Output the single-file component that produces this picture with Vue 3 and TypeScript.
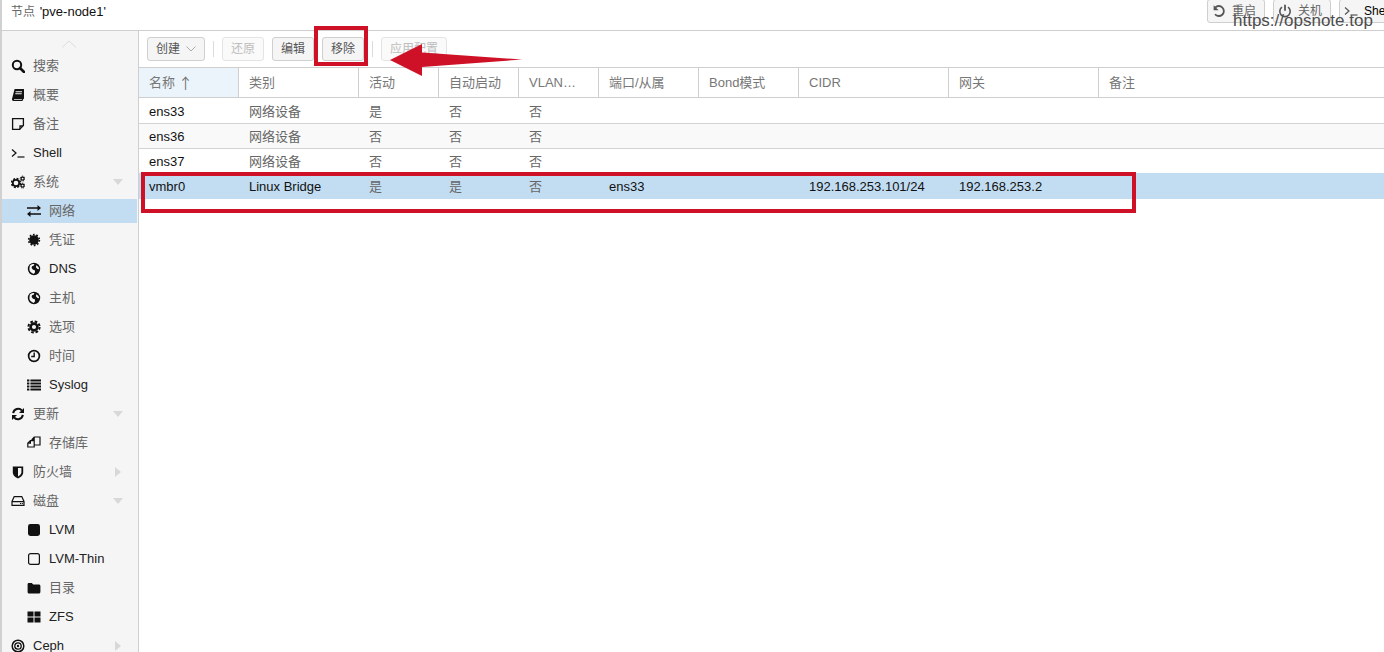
<script setup lang="ts">
const icons: Record<string, string> = {
  search: '<circle cx="6" cy="6" r="4.2" fill="none" stroke="currentColor" stroke-width="2"/><path d="M9 9l4 4" stroke="currentColor" stroke-width="2.6" stroke-linecap="round"/>',
  book: '<path d="M3.6 1h9.4v9.6l-1 .9-.5 1.5H2.6C1.4 13 1 12 1 11zM4.6 3.2v1h6.4v-1zM4.3 5.2v1h6.4v-1z" fill-rule="evenodd"/><path d="M3 11.2h8l-.3.9H3z" fill="#f5f5f5"/>',
  note: '<path d="M1.6 1.6h10.8v7l-3.8 3.8H1.6z" fill="none" stroke="currentColor" stroke-width="1.3"/><path d="M12 9H9v3.2" fill="none" stroke="currentColor" stroke-width="1.3"/>',
  terminal: '<path d="M1 3.5l4 3.5-4 3.5" fill="none" stroke="currentColor" stroke-width="1.2"/><path d="M6.5 11h7" stroke="currentColor" stroke-width="1.2"/>',
  cogs: '<circle cx="5" cy="8" r="3.2" fill="none" stroke="currentColor" stroke-width="1.7"/><circle cx="5" cy="8" r="4.4" fill="none" stroke="currentColor" stroke-width="1.6" stroke-dasharray="2 1.46"/><circle cx="11.6" cy="3.6" r="1.5" fill="none" stroke="currentColor" stroke-width="1.1"/><circle cx="11.6" cy="3.6" r="2.4" fill="none" stroke="currentColor" stroke-width="1" stroke-dasharray="1.2 .7"/><circle cx="11.6" cy="10.6" r="1.5" fill="none" stroke="currentColor" stroke-width="1.1"/><circle cx="11.6" cy="10.6" r="2.4" fill="none" stroke="currentColor" stroke-width="1" stroke-dasharray="1.2 .7"/>',
  exchange: '<path d="M0 4h10.5V1.7L14 4.8l-3.5 3V5.6H0z" transform="translate(0 -.8)"/><path d="M14 10H3.5v2.3L0 9.2l3.5-3v2.2H14z" transform="translate(0 .8)"/>',
  cert: '<circle cx="7" cy="7" r="4.8"/><circle cx="7" cy="7" r="5.4" fill="none" stroke="currentColor" stroke-width="1.6" stroke-dasharray="1.7 1.69"/>',
  globe: '<circle cx="7" cy="7" r="6.2"/><path d="M3 3.4c1.5-1.2 3-1.6 4.4-1.3L6.6 3.7 5 4.2 4.6 6 6 7.8l1.8.4.3 2-1.4 1.9C5 11.2 3 10 2.6 8.5 2.4 6.6 2.4 5 3 3.4zM9.3 3.2l2.2 1.7.6 2.4-1.6-.4-1.6-1.7z" fill="#f5f5f5"/>',
  cog: '<circle cx="7" cy="7" r="3.4" fill="none" stroke="currentColor" stroke-width="2.6"/><circle cx="7" cy="7" r="5.6" fill="none" stroke="currentColor" stroke-width="2" stroke-dasharray="2.6 1.8"/>',
  clock: '<circle cx="7" cy="7" r="5.4" fill="none" stroke="currentColor" stroke-width="1.7"/><path d="M7.2 3.6v3.9H4.2" fill="none" stroke="currentColor" stroke-width="1.4"/>',
  list: '<path d="M0 2h2.4v2H0zM3.4 2H14v2H3.4zM0 5h2.4v2H0zM3.4 5H14v2H3.4zM0 8h2.4v2H0zM3.4 8H14v2H3.4zM0 11h2.4v2H0zM3.4 11H14v2H3.4z" transform="translate(0 -.5)"/>',
  refresh: '<path d="M2.2 6.2A5 5 0 0 1 11 3.6" fill="none" stroke="currentColor" stroke-width="2"/><path d="M13 1v5H8z"/><path d="M11.8 7.8A5 5 0 0 1 3 10.4" fill="none" stroke="currentColor" stroke-width="2"/><path d="M1 13V8h5z"/>',
  clone: '<path d="M.8 7.2L3.4 4.600h3.800V11H.8zM3.400 4.600v2.600H.8M5 4.600V3.400L7.200 1h5.800v8H7.200M7.200 1v2.600H5" fill="none" stroke="currentColor" stroke-width="1.200"/>',
  shield: '<path d="M1.8 1.4h10.4v6c0 3-3 5-5.2 6-2.2-1-5.2-3-5.2-6z"/><path d="M7 3v8.4c1.6-.9 3.4-2.4 3.4-4.2V3z" fill="#f5f5f5"/>',
  hdd: '<path d="M3.2 2.6h7.6L13 7.4v4H1v-4zM1.4 7.6h11.2" fill="none" stroke="currentColor" stroke-width="1.2"/><path d="M9 9h1.200v1H9zM10.900 9h1v1h-1z"/>',
  square: '<rect x="1" y="1" width="12" height="12" rx="2.400"/>',
  squareo: '<rect x="1.600" y="1.600" width="10.800" height="10.800" rx="2" fill="none" stroke="currentColor" stroke-width="1.200"/>',
  folder: '<path d="M.6 3.4C.6 2.4 1.2 2 2 2h2.800L6.200 3.600h5.600c.9 0 1.600.6 1.600 1.500v6c0 .9-.7 1.500-1.600 1.500H2c-.8 0-1.400-.6-1.400-1.500z"/>',
  th: '<path d="M.5 1.500h6v5h-6zM7.500 1.500h6v5h-6zM.5 7.500h6v5h-6zM7.500 7.500h6v5h-6z"/>',
  ceph: '<circle cx="7" cy="7" r="5.800" fill="none" stroke="currentColor" stroke-width="1.500"/><circle cx="7" cy="7" r="3.200" fill="none" stroke="currentColor" stroke-width="1.300"/><circle cx="7" cy="7" r="1.200"/>',
  undo: '<path d="M3.200 3.600A5 5 0 1 1 3 10.200" fill="none" stroke="currentColor" stroke-width="1.800"/><path d="M1.600 1.200v5h5z"/>',
  power: '<path d="M4 3.200a5.200 5.200 0 1 0 6 0" fill="none" stroke="currentColor" stroke-width="1.600"/><path d="M7 .8v6" stroke="currentColor" stroke-width="1.800"/>'
}

interface NavItem { icon: string; label: string; level: number; caret?: 'down' | 'right'; latin?: boolean; active?: boolean }

const nav: NavItem[] = [
  { icon: 'search', label: '搜索', level: 1 },
  { icon: 'book', label: '概要', level: 1 },
  { icon: 'note', label: '备注', level: 1 },
  { icon: 'terminal', label: 'Shell', level: 1, latin: true },
  { icon: 'cogs', label: '系统', level: 1, caret: 'down' },
  { icon: 'exchange', label: '网络', level: 2, active: true },
  { icon: 'cert', label: '凭证', level: 2 },
  { icon: 'globe', label: 'DNS', level: 2, latin: true },
  { icon: 'globe', label: '主机', level: 2 },
  { icon: 'cog', label: '选项', level: 2 },
  { icon: 'clock', label: '时间', level: 2 },
  { icon: 'list', label: 'Syslog', level: 2, latin: true },
  { icon: 'refresh', label: '更新', level: 1, caret: 'down' },
  { icon: 'clone', label: '存储库', level: 2 },
  { icon: 'shield', label: '防火墙', level: 1, caret: 'right' },
  { icon: 'hdd', label: '磁盘', level: 1, caret: 'down' },
  { icon: 'square', label: 'LVM', level: 2, latin: true },
  { icon: 'squareo', label: 'LVM-Thin', level: 2, latin: true },
  { icon: 'folder', label: '目录', level: 2 },
  { icon: 'th', label: 'ZFS', level: 2, latin: true },
  { icon: 'ceph', label: 'Ceph', level: 1, caret: 'right', latin: true }
]

const columns = ['名称', '类别', '活动', '自动启动', 'VLAN…', '端口/从属', 'Bond模式', 'CIDR', '网关', '备注']

const rows = [
  { cells: ['ens33', '网络设备', '是', '否', '否', '', '', '', '', ''] },
  { cells: ['ens36', '网络设备', '否', '否', '否', '', '', '', '', ''] },
  { cells: ['ens37', '网络设备', '否', '否', '否', '', '', '', '', ''] },
  { cells: ['vmbr0', 'Linux Bridge', '是', '是', '否', 'ens33', '', '192.168.253.101/24', '192.168.253.2', ''] }
]

const isCjk = (s: string) => /[\u4e00-\u9fff]/.test(s)
</script>

<template>
  <div class="page">
    <header class="top">
      <div class="title"><span class="cjk">节点</span> 'pve-node1'</div>
      <button class="btn top-btn"><svg class="ic-g" viewBox="0 0 14 14" v-html="icons.undo"></svg><span>重启</span></button>
      <button class="btn top-btn"><svg class="ic-g" viewBox="0 0 14 14" v-html="icons.power"></svg><span>关机</span></button>
      <button class="btn top-btn shell"><svg class="ic-g" viewBox="0 0 14 14" v-html="icons.terminal"></svg><b>Shell</b></button>
    </header>
    <div class="body">
      <aside class="side">
        <div class="scroll-up"><svg width="16" height="8" viewBox="0 0 16 8"><path d="M1 7.500L8 1l7 6.500" fill="none" stroke="#dcdcdc"/></svg></div>
        <div
          v-for="item in nav"
          :key="item.label + item.icon"
          class="nav"
          :class="{ sub: item.level === 2, active: item.active }"
        >
          <svg class="ic" viewBox="0 0 14 14" v-html="icons[item.icon]"></svg>
          <span :class="{ cjk: !item.latin }">{{ item.label }}</span>
          <i v-if="item.caret" class="caret" :class="item.caret"></i>
        </div>
      </aside>
      <main class="main">
        <div class="toolbar">
          <button class="btn tool">创建<svg width="10" height="6" viewBox="0 0 10 6"><path d="M.5.5L5 5 9.500.5" fill="none" stroke="#aaa"/></svg></button>
          <i class="sep"></i>
          <button class="btn tool off">还原</button>
          <button class="btn tool">编辑</button>
          <button class="btn tool">移除</button>
          <i class="sep"></i>
          <button class="btn tool off last">应用配置</button>
        </div>
        <div class="grid head">
          <div v-for="(c, i) in columns" :key="c" class="hcell" :class="{ sorted: i === 0 }">{{ c }}<span v-if="i === 0" class="sort">↑</span></div>
        </div>
        <div
          v-for="(r, i) in rows"
          :key="r.cells[0]"
          class="grid row"
          :class="{ first: i === 0, alt: i === 1, sel: i === 3 }"
        >
          <div v-for="(c, j) in r.cells" :key="j" class="cell" :class="{ cjk: isCjk(c) }">{{ c }}</div>
        </div>
      </main>
    </div>

    <div class="mark box1"></div>
    <div class="mark box2"></div>
    <svg class="arrow" width="140" height="34" viewBox="0 0 140 34">
      <path d="M1 16L33 0v8.500L133 15.500 33 23v9z" fill="#ce1126"/>
    </svg>
    <div class="wm">https://opsnote.top</div>
  </div>
</template>

<style>
html, body { margin: 0; background: #fff; }
</style>

<style scoped>
.page {
  position: relative;
  width: 1384px;
  height: 652px;
  overflow: hidden;
  display: flex;
  flex-direction: column;
  box-sizing: border-box;
  border-left: 2px solid #d0d0d0;
  font: 13px/16px "Liberation Sans", "Noto Sans CJK SC", sans-serif;
  color: #111;
  background: #fff;
}
.cjk { color: #666; }
.top {
  flex: 0 0 31px;
  box-sizing: border-box;
  border-bottom: 1px solid #cfcfcf;
  display: flex;
  align-items: flex-start;
  gap: 8px;
}
.title {
  flex: 0 0 1197px;
  box-sizing: border-box;
  padding: 4px 0 0 9px;
  white-space: nowrap;
  word-spacing: 1px;
}
.title .cjk { font-size: 12px; }
.btn {
  box-sizing: border-box;
  display: inline-flex;
  align-items: center;
  justify-content: center;
  background: #f5f5f5;
  border: 1px solid #cfcfcf;
  border-radius: 3px;
  font: 12px/16px "Liberation Sans", "Noto Sans CJK SC", sans-serif;
  color: #555;
  padding: 0;
}
.top-btn {
  flex: none;
  width: 58px;
  height: 24px;
  margin-top: -1px;
  justify-content: flex-start;
  padding-left: 4px;
  gap: 6px;
  color: #666;
}
.top-btn.shell { width: 70px; }
.top-btn b { font-weight: 400; font-size: 12px; color: #000; }
.ic-g { width: 14px; height: 14px; fill: #555; color: #555; flex: none; }
.body { flex: 1; display: flex; min-height: 0; }
.side {
  flex: 0 0 136px;
  display: flex;
  flex-direction: column;
  border-right: 1px solid #cfcfcf;
  background: #f5f5f5;
  overflow: hidden;
}
.scroll-up { flex: none; height: 20px; display: flex; justify-content: center; align-items: flex-end; padding-right: 2px; box-sizing: border-box; padding-bottom: 3px; }
.nav {
  position: relative;
  flex: none;
  height: 24px;
  margin: 3px 1px 2px 0;
  display: flex;
  align-items: center;
  padding-left: 9px;
  gap: 8px;
  white-space: nowrap;
  color: #222;
}
.nav.sub { padding-left: 25px; }
.nav.active { background: #c2ddf2; }
.ic { width: 14px; height: 14px; flex: none; fill: #111; color: #111; }
.caret { position: absolute; left: 111px; top: 9px; width: 0; height: 0; }
.caret.down { border: 5.500px solid transparent; border-top: 6px solid #d8d8d8; border-bottom: 0; }
.caret.right { border: 5.500px solid transparent; border-left: 6px solid #d8d8d8; border-right: 0; left: 113px; top: 7px; }
.main { flex: 1; min-width: 0; display: flex; flex-direction: column; }
.toolbar {
  flex: 0 0 36px;
  box-sizing: border-box;
  display: flex;
  align-items: flex-start;
  padding: 6px 0 0 8px;
  gap: 8px;
}
.tool { width: 42px; height: 24px; }
.tool:first-child { width: 58px; gap: 6px; }
.tool.last { width: 66px; }
.tool.off { color: #bdbdbd; border-color: #e4e4e4; background: #fafafa; }
.sep { width: 1px; height: 16px; margin-top: 4px; background: #dcdcdc; }
.grid {
  display: grid;
  grid-template-columns: 100px 120px 80px 80px 80px 100px 100px 150px 150px 1fr;
  box-sizing: border-box;
}
.head {
  flex: 0 0 31px;
  border-top: 1px solid #cfcfcf;
  border-bottom: 1px solid #cfcfcf;
}
.hcell {
  padding-left: 10px;
  line-height: 29px;
  border-right: 1px solid #cfcfcf;
  color: #777;
  white-space: nowrap;
}
.hcell:last-child { border-right: 0; }
.hcell.sorted { background: #ecf4fb; }
.sort { margin-left: 3px; font: 15px/29px "Noto Sans CJK SC", sans-serif; vertical-align: top; }
.row {
  flex: 0 0 25px;
  border-bottom: 1px solid #d4d4d4;
}
.row.first { flex-basis: 26px; padding-top: 1px; }
.row.alt { background: #f9f9f9; }
.row.sel { flex-basis: 26px; margin-top: -1px; background: #c2ddf2; border-bottom: 0; }
.cell { padding-left: 10px; height: 24px; line-height: 26px; white-space: nowrap; }
.row.sel .cell { height: 26px; line-height: 28px; }
.mark { position: absolute; box-sizing: border-box; border: 4px solid #ce1126; }
.box1 { left: 312px; top: 26px; width: 54px; height: 40px; }
.box2 { left: 139px; top: 172px; width: 995px; height: 41px; }
.arrow { position: absolute; left: 387px; top: 44px; }
.wm {
  position: absolute;
  left: 1231px;
  top: 11px;
  font: 17px/20px "Liberation Sans", sans-serif;
  color: #4d4d4d;
  white-space: nowrap;
}
</style>
